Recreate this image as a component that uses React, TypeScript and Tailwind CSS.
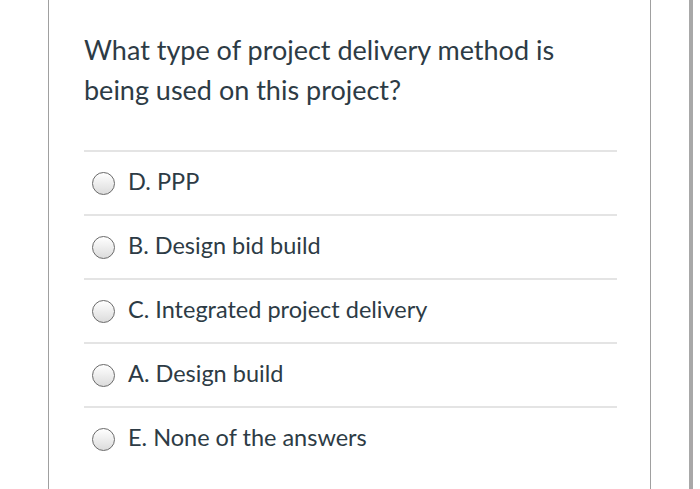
import React from "react";

const options = [
  "D. PPP",
  "B. Design bid build",
  "C. Integrated project delivery",
  "A. Design build",
  "E. None of the answers",
];

function Radio() {
  return (
    <span className="inline-block h-[23px] w-[23px] shrink-0 rounded-full border-[1.5px] border-[#6a6a6a] bg-gradient-to-b from-[#ffffff] to-[#dcdcdc]" />
  );
}

export default function App() {
  return (
    <div
      className="flex h-[489px] w-[700px] overflow-hidden bg-white text-[#2d3b45]"
      style={{ fontFamily: "Lato, 'Open Sans', sans-serif" }}
    >
      <div className="ml-[48px] h-full w-[603px] border-x border-[#a0a0a0] pl-[35px] pr-[33px]">
        <div className="pt-[30px] pb-[40px] text-[27px] leading-[40px]">
          What type of project delivery method is
          <br />
          being used on this project?
        </div>
        <div>
          {options.map((o) => (
            <div key={o} className="border-t-2 border-[#e4e4e4]">
              <div className="flex h-[62px] items-center gap-[13px] pl-[8px] text-[23.5px]">
                <Radio />
                <span className="-translate-y-[1px]">{o}</span>
              </div>
            </div>
          ))}
        </div>
      </div>
      <div className="ml-[38px] h-full w-[4px] bg-[#a8a8a8]" />
    </div>
  );
}
